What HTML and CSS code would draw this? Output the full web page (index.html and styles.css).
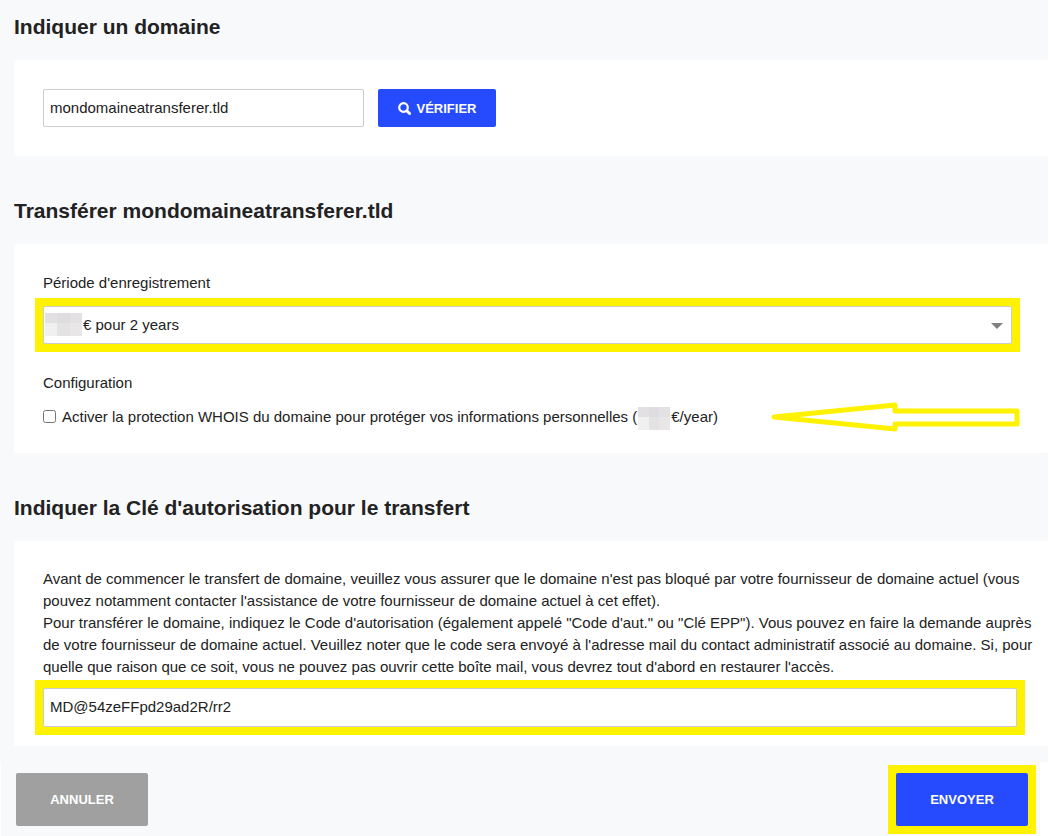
FILE: index.html
```html
<!DOCTYPE html>
<html lang="fr">
  <head>
    <meta charset="utf-8">
    <meta name="viewport" content="width=device-width, initial-scale=1.0">
    <title>Transfert de domaine</title>
    <link rel="stylesheet" href="styles.css">
  </head>
  <body>
    <form id="transfer">
      <div class="content">
        <h2><label for="domain">Indiquer un domaine</label></h2>
        <div class="panel search">
          <input type="text" id="domain" value="mondomaineatransferer.tld">
          <button type="button" class="verify">
            <svg width="13" height="13" viewBox="0 0 13 13" aria-hidden="true">
              <circle cx="5.5" cy="5.5" r="4.3" fill="none" stroke="#fff" stroke-width="2.2"/>
              <path d="M8.7 8.7L11.6 11.6" stroke="#fff" stroke-width="2.8" stroke-linecap="round"/>
            </svg>
            VÉRIFIER
          </button>
        </div>

        <h2>Transférer mondomaineatransferer.tld</h2>
        <div class="panel config">
          <label for="period">Période d'enregistrement</label>
          <div class="period highlight">
            <span class="masked"></span>
            <select id="period">
              <option>€ pour 2 years</option>
            </select>
          </div>
          <p>Configuration</p>
          <div class="whois">
            <input type="checkbox" id="whois">
            <label for="whois">Activer la protection WHOIS du domaine pour protéger vos informations personnelles (<span class="masked"></span>€/year)</label>
            <svg class="arrow" width="250" height="30" viewBox="0 0 250 30" aria-hidden="true">
              <path d="M4 15L125 3V9H247V22H125V27Z" fill="none" stroke="#fff200" stroke-width="5" stroke-linejoin="round"/>
            </svg>
          </div>
        </div>

        <h2><label for="authcode">Indiquer la Clé d'autorisation pour le transfert</label></h2>
        <div class="panel auth">
          <p>Avant de commencer le transfert de domaine, veuillez vous assurer que le domaine n'est pas bloqué par votre fournisseur de domaine actuel (vous pouvez notamment contacter l'assistance de votre fournisseur de domaine actuel à cet effet).<br>
          Pour transférer le domaine, indiquez le Code d'autorisation (également appelé "Code d'aut." ou "Clé EPP"). Vous pouvez en faire la demande auprès de votre fournisseur de domaine actuel. Veuillez noter que le code sera envoyé à l'adresse mail du contact administratif associé au domaine. Si, pour quelle que raison que ce soit, vous ne pouvez pas ouvrir cette boîte mail, vous devrez tout d'abord en restaurer l'accès.</p>
          <div class="authcode highlight">
            <input type="text" id="authcode" value="MD@54zeFFpd29ad2R/rr2">
          </div>
        </div>
      </div>

      <div class="actions">
        <button type="button" class="cancel">ANNULER</button>
        <div class="highlight">
          <button type="submit">ENVOYER</button>
        </div>
      </div>
    </form>
  </body>
</html>
```
FILE: styles.css
```css
* {
  box-sizing: border-box;
}
body {
  margin: 0;
  background: #fff;
  color: #222;
  font-family: "Liberation Sans", Arial, sans-serif;
  font-size: 15px;
  line-height: 22px;
}
p {
  margin: 0;
}
input, select, button {
  font-family: inherit;
  font-size: 15px;
  color: inherit;
}

.content {
  background: #f8f9fb;
  padding: 14px 0 16px 14px;
  margin-right: 1px;
}
h2 {
  margin: 42px 0 20px;
  font-size: 21px;
  line-height: 26px;
}
h2:first-child {
  margin-top: 0;
}
.panel {
  background: #fff;
  border-radius: 2px;
  padding: 29px;
}

input[type=text], select {
  height: 38px;
  padding: 0 6px 2px;
  border: 1px solid #ccc;
  border-radius: 2px;
  background: #fff;
}
button {
  display: block;
  height: 53px;
  width: 132px;
  padding: 0;
  border: none;
  border-radius: 2px;
  background: #264bff;
  color: #fff;
  font-size: 13px;
  font-weight: bold;
}
.highlight {
  background: #fff200;
  box-shadow: 0 0 0 8px #fff200;
}

.search {
  display: flex;
  gap: 14px;
}
#domain {
  width: 321px;
}
.verify {
  display: flex;
  align-items: center;
  justify-content: center;
  gap: 6px;
  width: 118px;
  height: 38px;
}

.config {
  padding: 28px 36px 25px 29px;
}
.config > label {
  display: block;
}
.period {
  position: relative;
  margin: 12px 0 28px;
}
.period select {
  display: block;
  width: 100%;
  padding-left: 39px;
  appearance: none;
}
.period::after {
  content: "";
  position: absolute;
  right: 9px;
  top: 17px;
  border: 6px solid transparent;
  border-top-color: #808080;
  border-bottom: none;
}
.masked {
  display: inline-block;
  width: 32px;
  height: 23px;
  margin: -2px 1px;
  vertical-align: middle;
  background: linear-gradient(90deg, #e2e0e2 0 33%, #dddcdf 33% 67%, #e3e1e3 67%) 0 0 / 100% 10px no-repeat,
    linear-gradient(90deg, #f0f0f0 0 33%, #e3e3e4 33% 67%, #e9e6e7 67%);
}
.period .masked {
  position: absolute;
  left: 1px;
  top: 7px;
  width: 37px;
  margin: 0 1px;
}
.whois {
  display: flex;
  align-items: center;
  position: relative;
  margin-top: 12px;
}
.whois input {
  width: 13px;
  height: 13px;
  margin: 0 6px 2px 0;
}
.arrow {
  position: absolute;
  right: -8px;
  top: -4px;
}

.auth {
  padding: 27px 8px 19px 29px;
}
.authcode {
  margin: 10px 23px 0 0;
}
.authcode input {
  display: block;
  width: 100%;
  height: 39px;
}

.actions {
  display: flex;
  justify-content: space-between;
  margin: 0 9px 0 1px;
  padding: 11px 12px 10px 15px;
  background: #f8f9fb;
}
.actions .cancel {
  background: #a0a0a0;
}
```
